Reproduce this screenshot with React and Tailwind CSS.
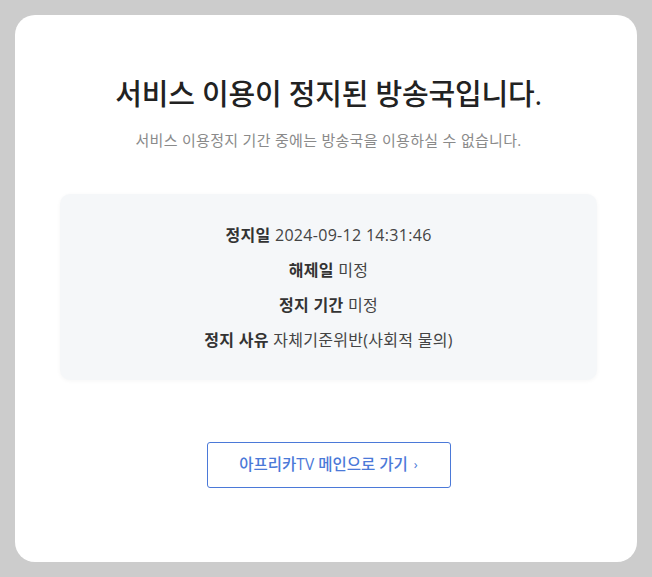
export default function App() {
  const font = { fontFamily: '"Open Sans", "Noto Sans CJK KR", sans-serif' };
  return (
    <div className="min-h-[577px] w-[652px] bg-[#cccccc] p-[15px]" style={font}>
      <div className="flex h-[547px] flex-col items-center rounded-[20px] bg-white pl-[45px] pr-[40px] pt-[57px]">
        <h1 className="text-[29px] leading-[44px] font-medium text-[#222] tracking-[-0.2px]">
          서비스 이용이 정지된 방송국입니다.
        </h1>
        <p className="mt-[14px] text-[15px] leading-[20px] text-[#8a8a8a] tracking-[0.3px]">
          서비스 이용정지 기간 중에는 방송국을 이용하실 수 없습니다.
        </p>
        <div className="mt-[44px] flex h-[186px] w-full flex-col items-center justify-center gap-[11px] rounded-[10px] bg-[#f5f7f9] shadow-[0_1px_4px_rgba(0,0,0,0.04)] text-[16px] leading-[24px] text-[#444] tracking-[0.3px]">
          <div><span className="font-bold text-[#333]">정지일</span> 2024-09-12 14:31:46</div>
          <div><span className="font-bold text-[#333]">해제일</span> 미정</div>
          <div><span className="font-bold text-[#333]">정지 기간</span> 미정</div>
          <div><span className="font-bold text-[#333]">정지 사유</span> 자체기준위반(사회적 물의)</div>
        </div>
        <a
          href="#"
          className="mt-[62px] flex h-[46px] w-[244px] items-center justify-center rounded-[3px] border border-[#4b79d8] text-[15.5px] font-medium text-[#4b79d8]"
        >
          아프리카TV 메인으로 가기 <span className="ml-[6px] text-[13px]">›</span>
        </a>
      </div>
    </div>
  );
}
